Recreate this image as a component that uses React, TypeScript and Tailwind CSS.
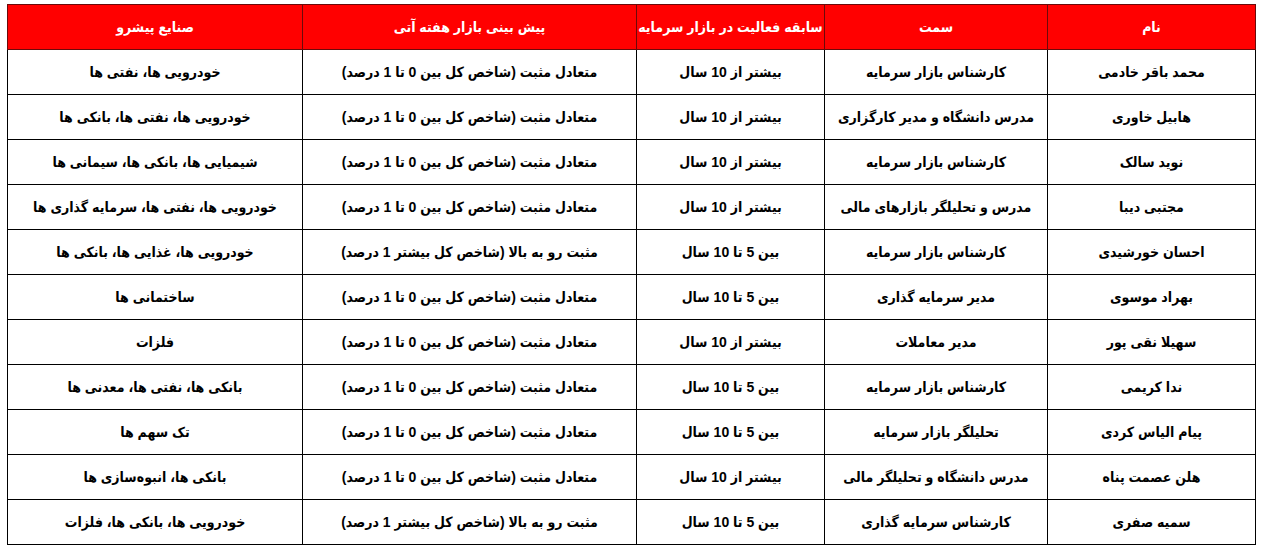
import React from "react";

const headers = ["نام", "سمت", "سابقه فعالیت در بازار سرمایه", "پیش بینی بازار هفته آتی", "صنایع پیشرو"];

const mid = "متعادل مثبت (شاخص کل بین 0 تا 1 درصد)";
const up = "مثبت رو به بالا (شاخص کل بیشتر 1 درصد)";
const over10 = "بیشتر از 10 سال";
const five10 = "بین 5 تا 10 سال";

const rows: string[][] = [
  ["محمد باقر خادمی", "کارشناس بازار سرمایه", over10, mid, "خودرویی ها، نفتی ها"],
  ["هابیل خاوری", "مدرس دانشگاه و مدیر کارگزاری", over10, mid, "خودرویی ها، نفتی ها، بانکی ها"],
  ["نوید سالک", "کارشناس بازار سرمایه", over10, mid, "شیمیایی ها، بانکی ها، سیمانی ها"],
  ["مجتبی دیبا", "مدرس و تحلیلگر بازارهای مالی", over10, mid, "خودرویی ها، نفتی ها، سرمایه گذاری ها"],
  ["احسان خورشیدی", "کارشناس بازار سرمایه", five10, up, "خودرویی ها، غذایی ها، بانکی ها"],
  ["بهراد موسوی", "مدیر سرمایه گذاری", five10, mid, "ساختمانی ها"],
  ["سهیلا نقی پور", "مدیر معاملات", over10, mid, "فلزات"],
  ["ندا کریمی", "کارشناس بازار سرمایه", five10, mid, "بانکی ها، نفتی ها، معدنی ها"],
  ["پیام الیاس کردی", "تحلیلگر بازار سرمایه", five10, mid, "تک سهم ها"],
  ["هلن عصمت پناه", "مدرس دانشگاه و تحلیلگر مالی", over10, mid, "بانکی ها، انبوه‌سازی ها"],
  ["سمیه صفری", "کارشناس سرمایه گذاری", five10, up, "خودرویی ها، بانکی ها، فلزات"],
];

const widths = ["w-[208px]", "w-[223px]", "w-[188px]", "w-[334px]", "w-[295px]"];

export default function App() {
  return (
    <div className="min-h-screen w-full bg-white pt-[4px] pl-[7px] font-['Liberation_Sans','DejaVu_Sans_Condensed','DejaVu_Sans',sans-serif]">
      <table dir="rtl" className="w-[1249px] table-fixed border-collapse">
        <colgroup>
          {widths.map((w, i) => (
            <col key={i} className={w} />
          ))}
        </colgroup>
        <thead>
          <tr className="h-[45px]">
            {headers.map((h) => (
              <th
                key={h}
                className="whitespace-nowrap border border-[#6b0a0a] bg-[#ff0000] p-0 text-center text-[14px] font-bold text-white"
              >
                {h}
              </th>
            ))}
          </tr>
        </thead>
        <tbody>
          {rows.map((r, i) => (
            <tr key={i} className="h-[45px]">
              {r.map((c, j) => (
                <td
                  key={j}
                  className="whitespace-nowrap border border-black p-0 text-center text-[14px] font-bold text-black"
                >
                  {c}
                </td>
              ))}
            </tr>
          ))}
        </tbody>
      </table>
    </div>
  );
}
